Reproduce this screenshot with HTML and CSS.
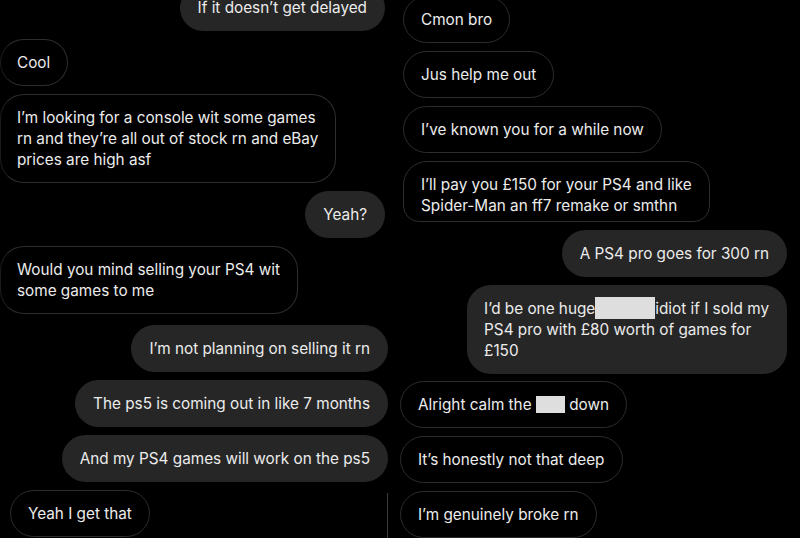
FILE: index.html
```html
<!DOCTYPE html>
<html>
<head>
<meta charset="utf-8">
<link rel="stylesheet" href="styles.css">
</head>
<body>
<div class="page">
  <div class="col col-left">
    <div class="msg sent first-left">If it doesn’t get delayed</div>
    <div class="msg recv edge">Cool</div>
    <div class="msg recv edge">I’m looking for a console wit some games<br>rn and they’re all out of stock rn and eBay<br>prices are high asf</div>
    <div class="msg sent">Yeah?</div>
    <div class="msg recv edge">Would you mind selling your PS4 wit<br>some games to me</div>
    <div class="msg sent wide bump">I’m not planning on selling it rn</div>
    <div class="msg sent wide">The ps5 is coming out in like 7 months</div>
    <div class="msg sent wide">And my PS4 games will work on the ps5</div>
    <div class="last-row">
      <div class="msg recv inset">Yeah I get that</div>
      <div class="divider"></div>
    </div>
  </div>
  <div class="col col-right">
    <div class="msg recv r5">Cmon bro</div>
    <div class="msg recv r5">Jus help me out</div>
    <div class="msg recv r5">I’ve known you for a while now</div>
    <div class="msg recv r5 cropped">I’ll pay you £150 for your PS4 and like<br>Spider-Man an ff7 remake or smthn</div>
    <div class="msg sent r-sent">A PS4 pro goes for 300 rn</div>
    <div class="msg sent r-sent pad17">I’d be one huge<span class="redact big"></span>idiot if I sold my<br>PS4 pro with £80 worth of games for<br>£150</div>
    <div class="msg recv r2 lift">Alright calm the <span class="redact small"></span> down</div>
    <div class="msg recv r2">It’s honestly not that deep</div>
    <div class="msg recv r2">I’m genuinely broke rn</div>
  </div>
</div>
</body>
</html>
```
FILE: styles.css
```css
html, body {
  margin: 0;
  padding: 0;
  background: #000;
  width: 800px;
  height: 538px;
  overflow: hidden;
}

.page {
  display: flex;
  width: 800px;
  height: 538px;
  overflow: hidden;
  font-family: Inter, "Liberation Sans", Arial, sans-serif;
  font-size: 15.3px;
  line-height: 21px;
  color: #ececec;
}

.col {
  display: flex;
  flex-direction: column;
  gap: 8px;
}

.col-left {
  width: 398px;
  margin-top: -15px;
  padding-right: 10px;
  box-sizing: border-box;
}

.col-right {
  width: 402px;
  margin-top: -4px;
  padding-right: 13px;
  box-sizing: border-box;
}

.msg {
  white-space: nowrap;
  border-radius: 24px;
  box-sizing: border-box;
}

.sent {
  align-self: flex-end;
  background: #262626;
  padding: 13px 18px;
}

.recv {
  align-self: flex-start;
  border: 1px solid #2d2d2d;
  padding: 12px 17px;
}

.first-left {
  margin-right: 3px;
  padding-top: 12px;
}

.col-left .sent:not(.wide) {
  margin-right: 3px;
}

.edge {
  margin-left: 0;
  padding-left: 16px;
  border-left-color: #1c1c1c;
}

.bump {
  margin-top: 3px;
}

.inset {
  margin-left: 10px;
}

.last-row {
  display: flex;
  justify-content: space-between;
  align-items: flex-start;
  flex: 1;
  min-height: 60px;
}

.last-row .msg {
  align-self: flex-start;
}

.divider {
  width: 1px;
  align-self: stretch;
  margin-top: 3px;
  background: #3a3a3a;
}

.r5 {
  margin-left: 5px;
}

.r2 {
  margin-left: 2px;
}

.pad17 {
  padding-left: 17px;
}

.cropped {
  height: 61px;
  padding-bottom: 6px;
  border-bottom-left-radius: 16px;
  border-bottom-right-radius: 16px;
}

.lift {
  margin-top: -1px;
}

.redact {
  display: inline-block;
  background: #dedede;
  vertical-align: middle;
}

.redact.big {
  width: 60px;
  height: 22px;
  margin-top: -3px;
}

.redact.small {
  width: 29px;
  height: 17px;
  margin-top: -3px;
}
```
